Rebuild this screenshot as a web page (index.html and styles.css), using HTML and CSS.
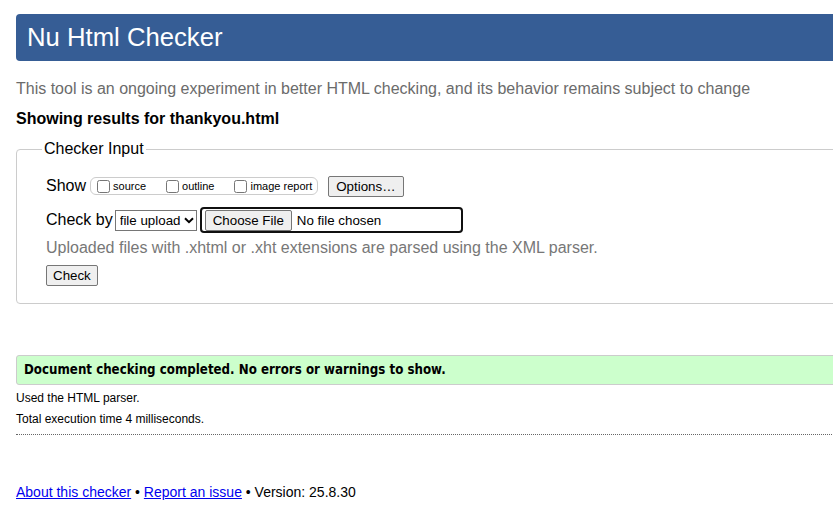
FILE: index.html
```html
<!DOCTYPE html>
<html lang="en">
<head>
<meta charset="utf-8">
<title>Nu Html Checker</title>
<link rel="stylesheet" href="styles.css">
</head>
<body>
<div class="page">
  <h1 class="banner">Nu Html Checker</h1>
  <p class="intro">This tool is an ongoing experiment in better HTML checking, and its behavior remains subject to change</p>
  <p class="showing">Showing results for thankyou.html</p>
  <fieldset class="input">
    <legend>Checker Input</legend>
    <div class="row">
      <span class="lbl">Show</span>
      <span class="opts">
        <label><input type="checkbox"><span>source</span></label>
        <label><input type="checkbox"><span>outline</span></label>
        <label><input type="checkbox"><span>image report</span></label>
      </span>
      <button class="btn options" type="button">Options…</button>
    </div>
    <div class="row row2">
      <span class="lbl">Check by</span>
      <span class="selwrap">
        <select class="sel"><option>file upload</option></select>
        <svg class="chev" width="10" height="7" viewBox="0 0 10 7" aria-hidden="true"><path d="M1 1.2 L5 5.2 L9 1.2" fill="none" stroke="#000" stroke-width="2"/></svg>
      </span>
      <span class="file"><button class="btn choose" type="button">Choose File</button><span class="nofile">No file chosen</span></span>
    </div>
    <p class="note">Uploaded files with .xhtml or .xht extensions are parsed using the XML parser.</p>
    <button class="btn check" type="button">Check</button>
  </fieldset>
  <p class="success">Document checking completed. No errors or warnings to show.</p>
  <p class="meta">Used the HTML parser.</p>
  <p class="meta">Total execution time 4 milliseconds.</p>
  <hr class="rule">
  <p class="footer"><a href="#">About this checker</a> • <a href="#">Report an issue</a> • Version: 25.8.30</p>
</div>
</body>
</html>
```
FILE: styles.css
```css
html, body { margin: 0; padding: 0; overflow: hidden; background: #fff; }
body { font-family: "Liberation Sans", Arial, sans-serif; color: #000; }
.page { width: 880px; padding: 14px 0 0 16px; }
.banner {
  margin: 0;
  height: 47px;
  box-sizing: border-box;
  padding: 6px 0 0 11px;
  background: #365d95;
  color: #fff;
  font-weight: normal;
  font-size: 25.7px;
  line-height: 34px;
  border-radius: 4px;
}
.intro { margin: 18px 0 0; font-size: 16px; line-height: 20px; color: #6b6b6b; }
.showing { margin: 10px 0 0; font-size: 16px; line-height: 20px; font-weight: bold; }
.input {
  margin: 11px 0 0;
  border: 1px solid #ccc;
  border-radius: 4px;
  padding: 9px 0 17px 29px;
  min-inline-size: 0;
}
.input legend { font-size: 16px; padding: 0 2px; margin-left: -4px; line-height: 18px; }
.row { display: flex; align-items: center; height: 28px; margin-top: 5px; }
.row2 { margin-top: 6px; }
.lbl { font-size: 16px; margin-right: 4px; }
.row2 .lbl { margin-right: 2px; }
.opts {
  display: inline-flex;
  align-items: center;
  border: 1px solid #ccc;
  border-radius: 6px;
  height: 16px;
  padding: 0 5px 0 2px;
  margin-right: 10px;
}
.opts label { display: inline-flex; align-items: center; font-size: 11px; margin-right: 16px; }
.opts label:last-child { margin-right: 0; }
.opts input { margin: 0 3px 0 4px; width: 13px; height: 13px; }
.btn {
  font-family: "Liberation Sans", Arial, sans-serif;
  font-size: 13.33px;
  background: #efefef;
  border: 1px solid #767676;
  border-radius: 2px;
  padding: 1px 6px;
  color: #000;
}
.options { height: 21px; padding: 1px 7px; }
.selwrap { position: relative; display: inline-flex; margin-right: 3px; }
.sel {
  appearance: none;
  -webkit-appearance: none;
  font-family: "Liberation Sans", Arial, sans-serif;
  font-size: 13.33px;
  color: #000;
  width: 82px;
  height: 21px;
  border: 1px solid #767676;
  border-radius: 0;
  background: #fff;
  margin: 0;
  padding: 0 0 0 4px;
}
.chev { position: absolute; right: 3px; top: 7px; pointer-events: none; }
.file {
  display: inline-flex;
  align-items: center;
  width: 263px;
  height: 26px;
  box-sizing: border-box;
  border: 2px solid #101010;
  border-radius: 4px;
  padding-left: 3px;
}
.choose { height: 21px; padding: 1px 7px; }
.nofile { font-size: 13.33px; margin-left: 5px; }
.note { margin: 5px 0 0; font-size: 16px; line-height: 18px; color: #777; }
.check { margin-top: 8px; height: 21px; }
.success {
  margin: 51px 0 0;
  background: #ccffcc;
  border: 1px solid #ccc;
  border-radius: 3px 0 0 3px;
  padding: 6px 7px;
  font-family: "DejaVu Sans Condensed", "DejaVu Sans", Verdana, sans-serif;
  font-stretch: semi-condensed;
  font-weight: bold;
  font-size: 13.2px;
  line-height: 16px;
}
.meta { margin: 6px 0 0; font-size: 12px; line-height: 15px; }
.meta + .meta { margin-top: 6px; }
.rule { margin: 7px 0 0; border: 0; border-top: 1px dotted #666; height: 0; }
.footer { margin: 49px 0 0; font-size: 14px; line-height: 17px; }
.footer a { color: #0000ee; }
```
